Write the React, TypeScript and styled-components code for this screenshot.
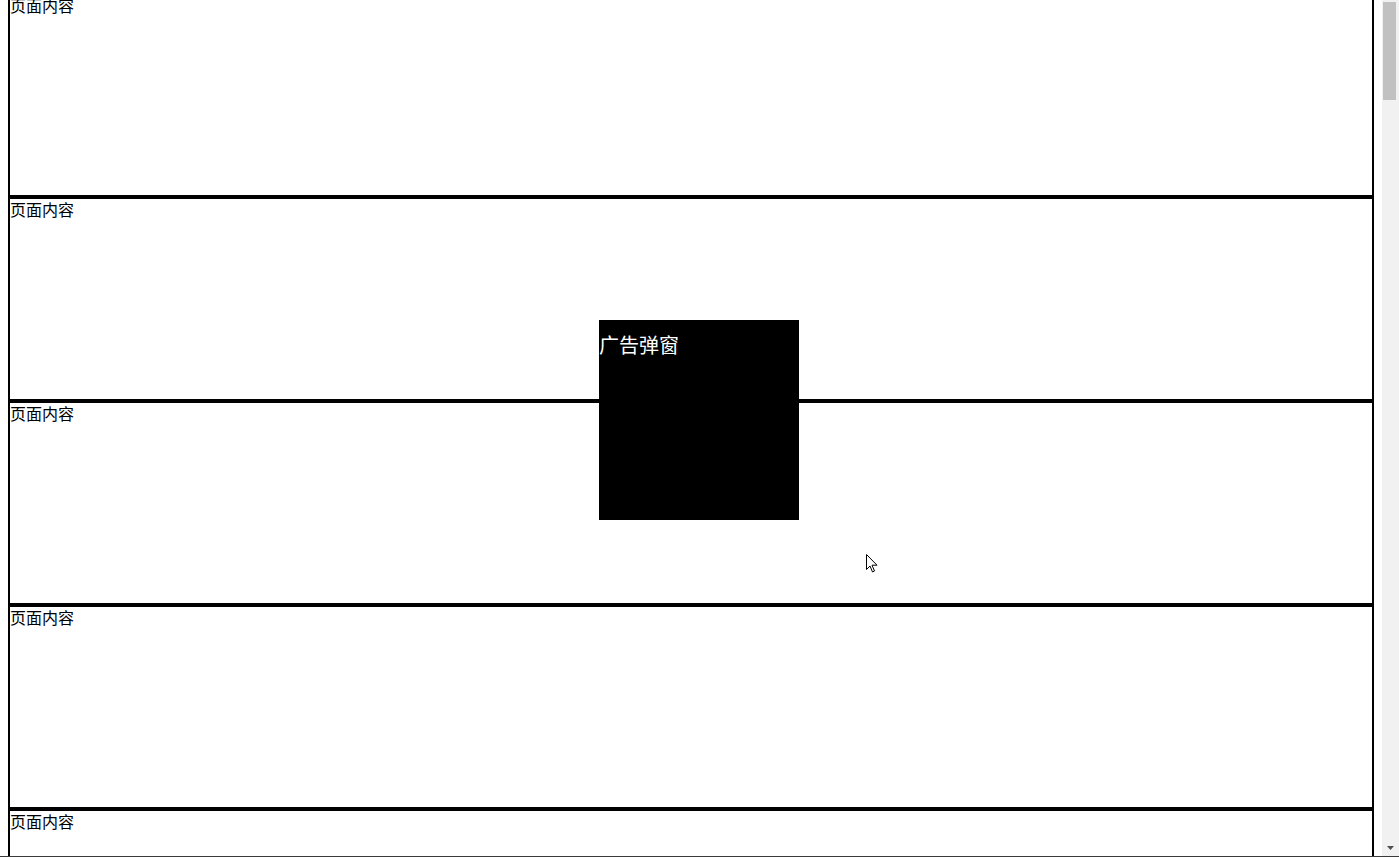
import styled, { createGlobalStyle } from "styled-components";

const GlobalStyle = createGlobalStyle`
  html, body {
    margin: 0;
    padding: 0;
    height: 100%;
    overflow: hidden;
    background: #fff;
  }
  body {
    font-family: "Noto Sans CJK SC", "Noto Sans", sans-serif;
  }
`;

const Screen = styled.div`
  display: flex;
  height: 100vh;
  box-sizing: border-box;
  border-bottom: 1px solid #3a3a3a;
`;

const Viewport = styled.div`
  flex: 1;
  overflow: hidden;
  padding: 0 8px;
`;

// page is scrolled a little, so the first block starts above the top edge
const Blocks = styled.div`
  margin-top: -7px;
`;

const Block = styled.div`
  height: 200px;
  border: 2px solid #000;
  font-size: 16px;
  line-height: 21px;
  color: #000;
`;

const Scrollbar = styled.div`
  width: 17px;
  flex-shrink: 0;
  background: #f1f1f1;
  display: flex;
  flex-direction: column;
  align-items: center;
`;

const Thumb = styled.div`
  margin-top: 2px;
  width: 13px;
  height: 98px;
  background: #c1c1c1;
  margin-right: 2px;
`;

const Track = styled.div`
  flex: 1;
`;

const ArrowButton = styled.div`
  height: 17px;
  width: 17px;
  display: flex;
  align-items: center;
  justify-content: center;
`;

const Popup = styled.div`
  position: fixed;
  left: 599px;
  top: 320px;
  width: 200px;
  height: 200px;
  background: #000;
  color: #fff;
  font-size: 20px;
  line-height: 26px;
  padding-top: 12px;
  box-sizing: border-box;
`;

const Cursor = styled.svg`
  position: fixed;
  left: 866px;
  top: 554px;
`;

export default function App() {
  const blocks = Array.from({ length: 5 });

  return (
    <>
      <GlobalStyle />
      <Screen>
        <Viewport>
          <Blocks>
            {blocks.map((_, i) => (
              <Block key={i}>页面内容</Block>
            ))}
          </Blocks>
        </Viewport>
        <Scrollbar>
          <Thumb />
          <Track />
          <ArrowButton>
            <svg width="7" height="4" viewBox="0 0 7 4">
              <polygon points="0,0 7,0 3.5,4" fill="#505050" />
            </svg>
          </ArrowButton>
        </Scrollbar>
      </Screen>
      <Popup>广告弹窗</Popup>
      <Cursor width="12" height="19" viewBox="0 0 12 19">
        <path
          d="M0.5 0.5 L0.5 15.5 L4 12 L6.5 18 L8.5 17 L6 11.2 L11 11.2 Z"
          fill="#fff"
          stroke="#000"
          strokeWidth="1"
          strokeLinejoin="miter"
        />
      </Cursor>
    </>
  );
}
